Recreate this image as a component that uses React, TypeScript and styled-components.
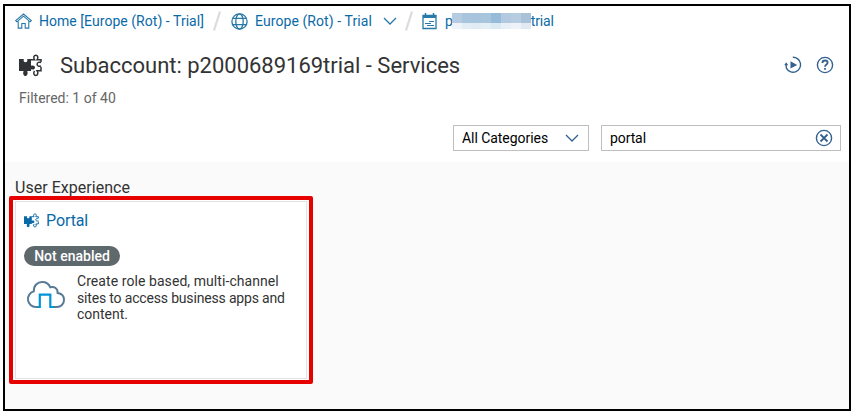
import React from "react";
import styled, { createGlobalStyle } from "styled-components";

const Global = createGlobalStyle`
  * { box-sizing: border-box; }
  html, body { margin: 0; padding: 0; background: #fff; }
  body { font-family: Roboto, "Liberation Sans", sans-serif; overflow: hidden; }
`;

const Frame = styled.div`
  width: 848px;
  height: 407px;
  margin: 4px 0 0 3px;
  border: 2px solid #000;
  background: #fafafa;
`;
const Header = styled.header`
  height: 156px;
  background: #fff;
`;
const Label = styled.span<{ $size: number; $spacing?: number; $color?: string; $weight?: number }>`
  font-size: ${(p) => p.$size}px;
  letter-spacing: ${(p) => p.$spacing ?? 0}px;
  color: ${(p) => p.$color ?? "#333"};
  font-weight: ${(p) => p.$weight ?? 400};
  white-space: nowrap;
`;
const Breadcrumbs = styled.nav`
  display: flex;
  align-items: center;
  height: 30px;
  padding-left: 10px;
`;
const Crumb = styled.div<{ $width: number }>`
  display: flex;
  align-items: center;
  flex: none;
  width: ${(p) => p.$width}px;
`;
const CrumbIcon = styled.span<{ $width: number }>`
  display: flex;
  flex: none;
  width: ${(p) => p.$width}px;
`;
const Redacted = styled.span`
  display: grid;
  grid-template-columns: repeat(8, 1fr);
  grid-template-rows: 10px 6px;
  width: 79px;
  height: 16px;
  flex: none;
`;
const Tile = styled.i<{ $tone: string }>`
  background: ${(p) => p.$tone};
`;
const TitleBar = styled.div`
  display: flex;
  align-items: center;
  height: 44px;
  margin-top: 7px;
  padding: 0 15px 0 14px;
`;
const Title = styled.h1`
  display: flex;
  flex: 1;
  margin: 0 0 0 18px;
`;
const Actions = styled.div`
  display: flex;
  gap: 14px;
`;
const Filtered = styled.div`
  display: flex;
  align-items: center;
  height: 20px;
  margin-top: 1px;
  padding-left: 14px;
`;
const Toolbar = styled.div`
  display: flex;
  justify-content: flex-end;
  gap: 12px;
  margin-top: 17px;
  padding-right: 8px;
`;
const Field = styled.div<{ $width: number; $end: number }>`
  display: flex;
  align-items: center;
  justify-content: space-between;
  width: ${(p) => p.$width}px;
  height: 26px;
  padding: 0 ${(p) => p.$end}px 0 8px;
  border: 1px solid #bfbfbf;
  background: #fff;
`;
const SectionTitle = styled.h2`
  display: flex;
  align-items: center;
  height: 20px;
  margin: 15px 0 0 10px;
`;
const Highlight = styled.section`
  width: 304px;
  height: 188px;
  margin: -1px 0 0 4px;
  padding: 1px 2px 1px 2px;
  border: 4px solid #e60000;
  border-radius: 2px;
  background: #fff;
`;
const Card = styled.article`
  width: 292px;
  height: 178px;
  padding: 8px 8px;
  border: 1px solid #e2e2e2;
  background: #fff;
`;
const CardHead = styled.div`
  display: flex;
  align-items: center;
  gap: 7px;
  height: 20px;
`;
const Badge = styled.div`
  display: flex;
  align-items: center;
  justify-content: center;
  width: 96px;
  height: 20px;
  margin-top: 16px;
  border-radius: 10px;
  background: #5e696e;
`;
const CardBody = styled.div`
  display: flex;
  margin-top: 7px;
`;
const CloudSlot = styled.div`
  width: 53px;
  flex: none;
  padding: 7px 0 0 2px;
`;
const Description = styled.div`
  display: flex;
  flex-direction: column;
  line-height: 16.5px;
`;

const BLUE = "#0a6aa8";

const Home = () => (
  <svg width="17" height="16" viewBox="0 0 17 16" fill="none" stroke="#2878a8" strokeWidth="1.1">
    <path d="M.7 7.7 8.5 1l7.8 6.700-1.200 1.100L8.500 3.200 1.900 8.800Z" />
    <path d="M3.200 8.200v6.900h3.600v-4.600h3.400v4.600h3.600V8.200" />
  </svg>
);
const Globe = () => (
  <svg width="17" height="17" viewBox="0 0 17 17" fill="none" stroke="#2878a8" strokeWidth="1.3">
    <circle cx="8.5" cy="8.5" r="7.6" />
    <ellipse cx="8.5" cy="8.5" rx="3.7" ry="7.6" />
    <path d="M1.8 5.3h13.4M1.8 11.7h13.4" strokeWidth="1.2" />
  </svg>
);
const Chevron = ({ color = "#34618f" }: { color?: string }) => (
  <svg width="14" height="9" viewBox="0 0 14 9" fill="none" stroke={color} strokeWidth="1.3">
    <path d="m1 1 6 6 6-6" />
  </svg>
);
const Slash = () => (
  <svg width="8" height="20" viewBox="0 0 8 20" stroke="#dcdcdc" strokeWidth="2.2">
    <path d="M7 .5 1 19.5" />
  </svg>
);
const Calendar = () => (
  <svg width="15" height="17" viewBox="0 0 15 17" fill="none" stroke="#2878a8">
    <path d="M1 2.500h13v13H1Z" strokeWidth="1.3" />
    <path d="M1 3.500h13" strokeWidth="3" />
    <path d="M3.500 0v3M11.500 0v3" strokeWidth="1.5" />
    <path d="M7 8.500h5M3 10.500h6M5 12.500h7" strokeWidth="1.1" />
  </svg>
);
const Puzzle = ({ size, color }: { size: number; color: string }) => (
  <svg width={size} height={size} viewBox="0 0 23 23" fill="none">
    <path
      fill={color}
      d="M0 5h4.800c-.6 2.200.3 3.200 1.700 3.200S8.800 7.200 8.200 5H12v6.800c2.200-1 4 0 4 1.700s-1.800 2.700-4 1.700V17H8.200c1 2.600 0 5-1.800 5s-2.800-2.400-1.800-5H0Z"
    />
    <path
      stroke={color}
      strokeWidth="1.5"
      d="M12 5.700h3.500c-1.500-2.300-.5-4.500 1.300-4.500s2.800 2.200 1.300 4.500H22V8M22 13v3.800h-3.900c1.500 2.300.5 4.700-1.300 4.700s-2.800-2.400-1.300-4.700M22 8.700c-1.800-1-3.900-.3-3.900 1.600s2.100 2.500 3.900 1.500"
    />
  </svg>
);
const Replay = () => (
  <svg width="18" height="18" viewBox="0 0 18 18" fill="none" stroke="#34618f">
    <path d="M8.800 1.200a7.500 7.500 0 1 1-6.400 10.900l-.4-3.800" strokeWidth="1.4" />
    <path d="m.2 9.300 2-3 2 3Z" fill="#34618f" stroke="none" />
    <path d="m6.500 5.200 6.700 3.700-6.700 3.700Z" fill="#34618f" stroke="none" />
  </svg>
);
const Help = () => (
  <svg width="18" height="18" viewBox="0 0 18 18" fill="none" stroke="#34618f">
    <circle cx="9" cy="9" r="7.6" strokeWidth="1.4" />
    <path d="M6.400 7c0-1.500 1-2.500 2.600-2.500s2.600.9 2.600 2.200C11.600 8.600 9 8.500 9 10.800" strokeWidth="1.8" />
    <path d="M8.100 12h1.800v1.700H8.100z" fill="#34618f" stroke="none" />
  </svg>
);
const Clear = () => (
  <svg width="18" height="18" viewBox="0 0 18 18" fill="none" stroke="#34618f">
    <circle cx="9" cy="9" r="7.6" strokeWidth="1.4" />
    <path d="m5.500 5.500 7 7m0-7-7 7" strokeWidth="1.8" />
  </svg>
);
const Cloud = () => (
  <svg width="40" height="30" viewBox="0 0 40 30" fill="none">
    <path
      stroke="#587b95"
      strokeWidth="2"
      d="M12.500 27H9.800a8 8 0 0 1-2-15.700C7.600 5.500 11.400 2 16.200 2c3.700 0 6.700 1.900 8.100 5.300 3.900-1.400 7.700 1.200 7.300 5.700 4 .5 6.400 3.300 6.400 6.900 0 4-3 7.100-7.200 7.100h-4.600"
    />
    <path stroke="#0095d9" strokeWidth="2.2" d="M11.500 27h2.300V14.700h10.500V27h3.700" />
  </svg>
);

const tones = [
  "#b4cbe1", "#a9c4dd", "#a8c4dc", "#a9c5de", "#96bbd9", "#b2c9df", "#b6cce0", "#a9c2da",
  "#edf3f8", "#e3edf5", "#e1ebf3", "#e4eef5", "#dbe9f3", "#e7f0f6", "#edf3f8", "#e1eaf3",
];

export default function App() {
  return (
    <>
      <Global />
      <Frame>
        <Header>
          <Breadcrumbs>
            <Crumb $width={198}>
              <CrumbIcon $width={24}><Home /></CrumbIcon>
              <Label $size={14} $color={BLUE} $spacing={0.04}>Home [Europe (Rot) - Trial]</Label>
            </Crumb>
            <CrumbIcon $width={18}><Slash /></CrumbIcon>
            <Crumb $width={152}>
              <CrumbIcon $width={24}><Globe /></CrumbIcon>
              <Label $size={14} $color={BLUE} $spacing={0.08}>Europe (Rot) - Trial</Label>
            </Crumb>
            <CrumbIcon $width={22}><Chevron color="#2878a8" /></CrumbIcon>
            <CrumbIcon $width={17}><Slash /></CrumbIcon>
            <Crumb $width={140}>
              <CrumbIcon $width={23}><Calendar /></CrumbIcon>
              <Label $size={14} $color={BLUE} $spacing={-1.2}>p</Label>
              <Redacted>{tones.map((tone, i) => <Tile key={i} $tone={tone} />)}</Redacted>
              <Label $size={14} $color={BLUE} $spacing={-0.1}>trial</Label>
            </Crumb>
          </Breadcrumbs>
          <TitleBar>
            <Puzzle size={23} color="#2f3336" />
            <Title><Label $size={22} $spacing={-0.01}>Subaccount: p2000689169trial - Services</Label></Title>
            <Actions><Replay /><Help /></Actions>
          </TitleBar>
          <Filtered><Label $size={14} $color="#666">Filtered: 1 of 40</Label></Filtered>
          <Toolbar>
            <Field $width={136} $end={9}>
              <Label $size={14} $color="#000" $spacing={-0.05}>All Categories</Label>
              <Chevron />
            </Field>
            <Field $width={240} $end={7}>
              <Label $size={14} $color="#000" $spacing={-0.1}>portal</Label>
              <Clear />
            </Field>
          </Toolbar>
        </Header>
        <SectionTitle><Label $size={16} $spacing={0.03}>User Experience</Label></SectionTitle>
        <Highlight>
          <Card>
            <CardHead>
              <Puzzle size={15} color={BLUE} />
              <Label $size={16} $color={BLUE} $spacing={-0.1}>Portal</Label>
            </CardHead>
            <Badge><Label $size={14} $color="#fff" $weight={500}>Not enabled</Label></Badge>
            <CardBody>
              <CloudSlot><Cloud /></CloudSlot>
              <Description>
                <Label $size={14} $spacing={0.07}>Create role based, multi-channel</Label>
                <Label $size={14} $spacing={-0.17}>sites to access business apps and</Label>
                <Label $size={14}>content.</Label>
              </Description>
            </CardBody>
          </Card>
        </Highlight>
      </Frame>
    </>
  );
}
